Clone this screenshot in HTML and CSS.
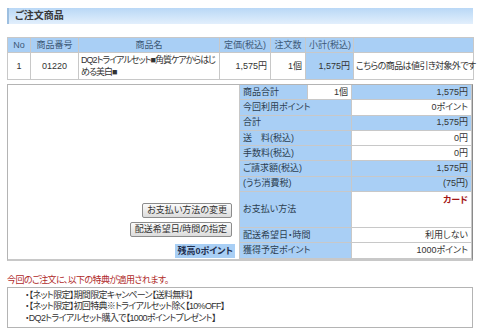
FILE: index.html
```html
<!DOCTYPE html>
<html lang="ja">
<head>
    <meta charset="UTF-8">
    <title>ご注文商品</title>
    <link rel="stylesheet" href="styles.css">
</head>
<body>
    <div class="page">
        <h2 class="section-title">ご注文商品</h2>

        <!-- ordered items -->
        <table class="items">
            <colgroup>
                <col class="c-no"><col class="c-code"><col class="c-name"><col class="c-price">
                <col class="c-qty"><col class="c-sub"><col class="c-note">
            </colgroup>
            <tr>
                <th>No</th>
                <th>商品番号</th>
                <th>商品名</th>
                <th>定価(税込)</th>
                <th>注文数</th>
                <th>小計(税込)</th>
                <th></th>
            </tr>
            <tr>
                <td class="center">1</td>
                <td class="center">01220</td>
                <td class="name">DQ2トライアルセット■角質ケアからはじめる美白■</td>
                <td class="right">1,575円</td>
                <td class="right">1個</td>
                <td class="right blue">1,575円</td>
                <td class="note">こちらの商品は値引き対象外です</td>
            </tr>
        </table>

        <!-- totals and order options -->
        <div class="summary">
            <div class="actions">
                <button type="button" class="btn">お支払い方法の変更</button>
                <button type="button" class="btn">配送希望日/時間の指定</button>
                <span class="balance">残高0ポイント</span>
            </div>
            <table class="totals">
                <colgroup>
                    <col class="c-label"><col class="c-count"><col class="c-value">
                </colgroup>
                <tr>
                    <th>商品合計</th>
                    <td class="right white">1個</td>
                    <td class="right blue">1,575円</td>
                </tr>
                <tr>
                    <th colspan="2">今回利用ポイント</th>
                    <td class="right white">0ポイント</td>
                </tr>
                <tr>
                    <th colspan="2">合計</th>
                    <td class="right blue">1,575円</td>
                </tr>
                <tr>
                    <th colspan="2">送　料(税込)</th>
                    <td class="right white">0円</td>
                </tr>
                <tr>
                    <th colspan="2">手数料(税込)</th>
                    <td class="right white">0円</td>
                </tr>
                <tr>
                    <th colspan="2">ご請求額(税込)</th>
                    <td class="right blue">1,575円</td>
                </tr>
                <tr>
                    <th colspan="2">(うち消費税)</th>
                    <td class="right blue">(75円)</td>
                </tr>
                <tr class="pay-row">
                    <th colspan="2">お支払い方法</th>
                    <td class="right white top"><span class="pay">カード</span></td>
                </tr>
                <tr>
                    <th colspan="2">配送希望日・時間</th>
                    <td class="right white">利用しない</td>
                </tr>
                <tr>
                    <th colspan="2">獲得予定ポイント</th>
                    <td class="right white">1000ポイント</td>
                </tr>
            </table>
        </div>

        <p class="notice">今回のご注文に、以下の特典が適用されます。</p>
        <ul class="perks">
            <li>・【ネット限定】期間限定キャンペーン【送料無料】</li>
            <li>・【ネット限定】初回特典※トライアルセット除く【10%OFF】</li>
            <li>・DQ2トライアルセット購入で【1000ポイントプレゼント】</li>
        </ul>
    </div>
</body>
</html>
```

FILE: styles.css
```css
/* base */
body {
    margin: 0;
    background-color: #ffffff;
    font-family: "Liberation Sans", "Noto Sans CJK JP", sans-serif;
    font-size: 9px;
    font-feature-settings: "palt";
    color: #333333;
}

.page {
    width: 466px;
    padding: 8px 7px 0 7px;
}

/* section header bar */
.section-title {
    margin: 0 0 13px 0;
    height: 16px;
    line-height: 16px;
    padding-left: 6px;
    font-size: 10px;
    font-weight: bold;
    color: #3a3a3a;
    border-left: 2px solid #9dbfe0;
    background: linear-gradient(to bottom, #b9d8f6, #e2effc);
}

/* ordered items table */
table {
    border-collapse: collapse;
    table-layout: fixed;
}

.items {
    width: 466px;
    border: 1px solid #c4c4c4;
}

.items th,
.items td {
    border: 1px solid #c8c8c8;
    padding: 0 3px;
    line-height: 12px;
}

.items th {
    height: 14px;
    background-color: #a9cff5;
    color: #3c5876;
    font-weight: normal;
    text-align: center;
    white-space: nowrap;
}

.items td {
    height: 26px;
}

.items .name {
    padding: 0 2px;
    letter-spacing: -1px;
}

.items .note {
    padding: 0 2px;
    letter-spacing: -0.6px;
    white-space: nowrap;
}

.c-no { width: 23px; }
.c-code { width: 48px; }
.c-name { width: 141px; }
.c-price { width: 51px; }
.c-qty { width: 35px; }
.c-sub { width: 48px; }
.c-note { width: 120px; }

.center { text-align: center; }
.right { text-align: right; }
.top { vertical-align: top; }
.blue { background-color: #a9cff5; }
.white { background-color: #ffffff; }

/* totals box */
.summary {
    display: flex;
    margin-top: 4px;
    border: 1px solid #b4b4b4;
    border-right-color: #8a8a8a;
    border-bottom: 2px solid #c8c8c8;
}

.actions {
    flex: 1;
    display: flex;
    flex-direction: column;
    align-items: flex-end;
    justify-content: flex-end;
    gap: 4px;
    padding: 0 4px 1px 0;
}

.btn {
    font-family: inherit;
    font-size: 9px;
    font-feature-settings: "palt";
    color: #333333;
    height: 15px;
    line-height: 13px;
    padding: 0 4px;
    border: 1px solid #8c8c8c;
    border-radius: 2px;
    background: linear-gradient(to bottom, #fbfbfb, #dcdcdc);
    margin-right: 3px;
}

.balance {
    margin-top: 3px;
    padding: 1px 2px;
    line-height: 12px;
    font-weight: bold;
    color: #1f2f4f;
    background-color: #a9cff5;
}

.totals {
    width: 232px;
}

.c-label { width: 68px; }
.c-count { width: 44px; }
.c-value { width: 120px; }

.totals th,
.totals td {
    height: 14.3px;
    line-height: 13px;
    padding: 0 3px;
    border: 1px solid #c8c8c8;
    white-space: nowrap;
}

.totals tr:first-child th,
.totals tr:first-child td {
    border-top: none;
}

.totals th {
    background-color: #a9cff5;
    color: #2c3e50;
    font-weight: normal;
    text-align: left;
}

.totals .pay-row th,
.totals .pay-row td {
    height: 35px;
}

.pay {
    display: inline-block;
    margin-top: 2px;
    font-weight: bold;
    color: #a31515;
}

/* benefits */
.notice {
    margin: 14px 0 1px 0;
    line-height: 11px;
    letter-spacing: -0.6px;
    color: #b02a2a;
}

.perks {
    list-style: none;
    margin: 0;
    padding: 2px 0 3px 17px;
    border: 1px solid #b4b4b4;
    letter-spacing: -0.7px;
}

.perks li {
    line-height: 11.5px;
}
```
